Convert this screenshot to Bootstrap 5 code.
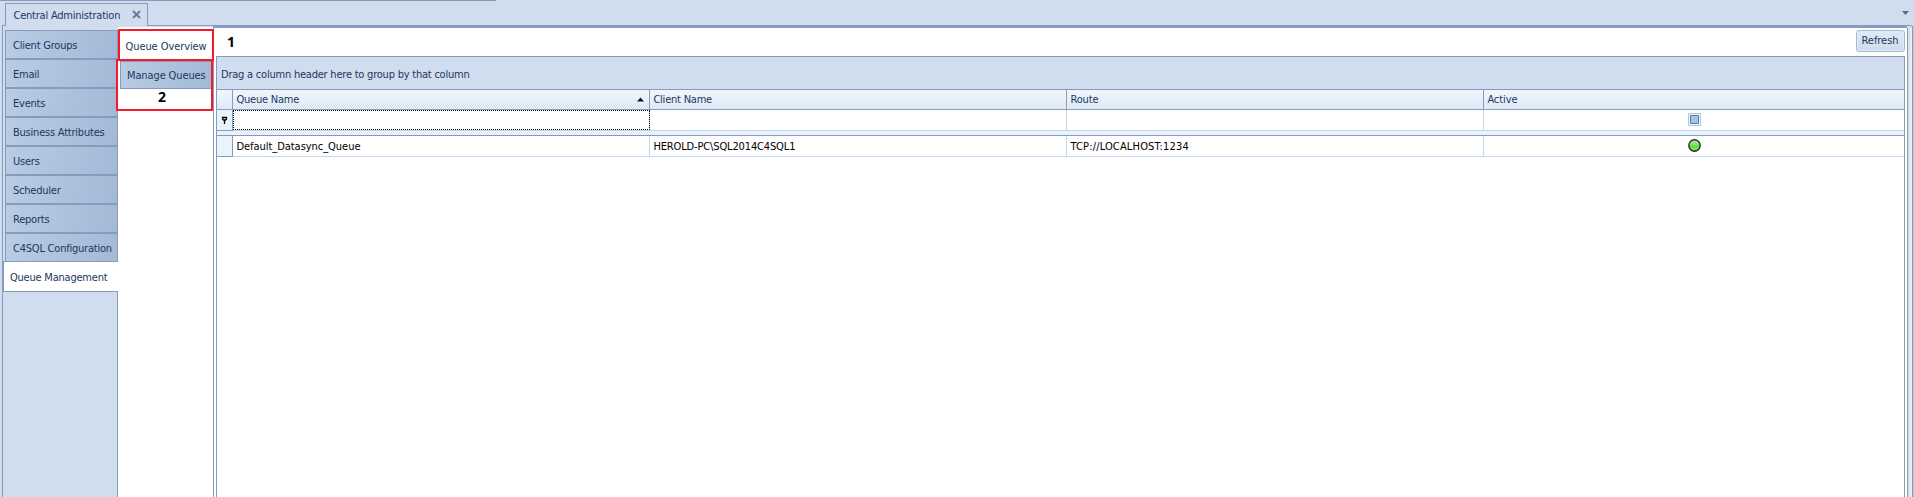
<!DOCTYPE html>
<html lang="en">
<head>
<meta charset="utf-8">
<title>Central Administration</title>
<link href="https://cdn.jsdelivr.net/npm/bootstrap@5.3.0/dist/css/bootstrap.min.css" rel="stylesheet">
<style>
:root{--line:#849dbe;--soft:#c3d6ef;--panel:#d0ddee;--ink:#203860}
html,body{height:100%}
body{font:11px/14px "DejaVu Sans Condensed","DejaVu Sans",sans-serif;font-stretch:condensed;color:var(--ink);background:var(--panel);overflow:hidden;white-space:nowrap;letter-spacing:-.22px}
.app{height:497px;width:1914px}
.topbar{height:28px}
.topline{width:496px;height:1px;background:var(--line);top:0;left:0}
.doc-tab{width:143px;height:23px;margin-left:5px;margin-top:3px;border:1px solid var(--line);border-bottom:0;padding:1px 18px 0 7.5px}
.stub{left:2px;top:25px;width:4px;height:1px;background:var(--line)}
.under{left:147px;right:2px;top:25px;height:1px;background:var(--line)}
.thick{left:213px;right:7px;top:25px;height:3px;background:var(--line)}
.workspace{height:469px}
.edge{width:3px;border-right:1px solid var(--line);margin-top:-2px}
.side{width:115px;padding-top:2px;background:linear-gradient(var(--line),var(--line)) right 264px/1px 100% no-repeat}
.side-tab{height:29px;margin-left:2px;padding:2px 0 0 7px;border:1px solid var(--line);background:linear-gradient(100deg,#b8cce4,#a3b9d6)}
.side-tab.current{height:31px;margin:-1px 0 0 0;border-right:0;padding-left:6px;background:#fff}
.inner{width:96px;margin-top:-1px;background:#fff;border-right:1px solid var(--line)}
.inner .over{height:34px;padding:13px 0 0 7.5px;letter-spacing:-.08px}
.manage{height:28px;margin:0 1px 0 2px;padding:2px 0 0 6px;border:1px solid var(--line);background:linear-gradient(100deg,#b8cce4,#a3b9d6);letter-spacing:-.12px}
.content-area{width:1694px;flex:none;background:#fff;padding:2px 2px 0 2px;border-right:1px solid var(--line)}
.tools{height:26px}
.refresh{width:49px;height:22px;font:inherit;letter-spacing:-.05px;color:var(--ink);padding:0 1px 0 0;border:1px solid #a3b9d6;border-radius:3px;background:linear-gradient(#dfeaf7,#cdddec);box-shadow:inset 0 0 0 1px #e3ecf7}
.queue-grid{border:1px solid var(--line);border-bottom:0;width:1689px;height:441px}
.groupby{height:32px;padding:4px 0 0 4px;background:var(--panel)}
.g-row{display:grid;grid-template-columns:16px 417px 417px 417px 1fr}
.g-row>div{border-right:1px solid var(--soft);padding-left:3.4px;display:flex;align-items:center}
.g-row>div:first-child{border-right-color:var(--line);background:#eaf2fb;padding:0}
.g-row>div:last-child{border-right:0}
.g-head{height:21px;border-top:1px solid var(--line);border-bottom:1px solid var(--line);background:linear-gradient(#f1f6fc,#deeaf8)}
.g-head>div{border-right-color:var(--line)!important}
.g-head>div:first-child{background:none}
.g-filter,.g-data{height:21px;border-bottom:1px solid var(--soft)}
.g-data{color:#000}
.g-data span{padding-top:1px}
.g-row>.state-cell{align-items:flex-start;justify-content:center;padding:3px 0 0 1px}
.g-filter>div:first-child,.g-data>div:first-child{border-bottom:1px solid var(--line);margin-bottom:-1px}
.g-gap{height:5px;border-bottom:1px solid var(--line);background:#e9f2fb}
.focus-cell{outline:1px dotted #000;outline-offset:-1px}
.gutter{width:4px;flex:none;background:linear-gradient(90deg,#dadada,#f2f2f2)}
.last{width:2px;flex:none;margin-top:-2px;border-left:1px solid var(--line);background:#b4c8e3}
.note{position:absolute;border:2px solid #f8192b}
.num{position:absolute;font:bold 14px/16px "Open Sans",sans-serif;color:#000}
svg{display:block;flex:none}
</style>
</head>
<body>
<div class="app position-relative">
  <div class="topbar d-flex justify-content-between">
    <div class="doc-tab d-flex align-items-center justify-content-between"><span>Central Administration</span></div>
    <svg class="mt-2" width="15" height="10" viewBox="0 0 15 10"><path d="M3 3h7L6.500 7z" fill="#52698f"/></svg>
    <svg class="position-absolute" style="left:132px;top:10px" width="9" height="9" viewBox="0 0 9 9"><path d="M1 1l7 7M8 1l-7 7" stroke="#637aa1" stroke-width="2"/></svg>
    <i class="topline position-absolute"></i><i class="stub position-absolute"></i><i class="under position-absolute"></i><i class="thick position-absolute"></i>
  </div>
  <div class="workspace d-flex">
    <div class="edge"></div>
    <nav class="side">
      <div class="side-tab d-flex align-items-center"><span>Client Groups</span></div>
      <div class="side-tab d-flex align-items-center"><span>Email</span></div>
      <div class="side-tab d-flex align-items-center"><span>Events</span></div>
      <div class="side-tab d-flex align-items-center"><span>Business Attributes</span></div>
      <div class="side-tab d-flex align-items-center"><span>Users</span></div>
      <div class="side-tab d-flex align-items-center"><span>Scheduler</span></div>
      <div class="side-tab d-flex align-items-center"><span>Reports</span></div>
      <div class="side-tab d-flex align-items-center"><span>C4SQL Configuration</span></div>
      <div class="side-tab current d-flex align-items-center"><span>Queue Management</span></div>
    </nav>
    <nav class="inner">
      <div class="over"><span>Queue Overview</span></div>
      <div class="manage d-flex align-items-center"><span>Manage Queues</span></div>
    </nav>
    <main class="content-area">
      <div class="tools d-flex justify-content-end"><button class="refresh"><span>Refresh</span></button></div>
      <div class="queue-grid">
        <div class="groupby d-flex align-items-center"><span>Drag a column header here to group by that column</span></div>
        <div class="g-row g-head">
          <div></div>
          <div class="justify-content-between"><span>Queue Name</span><svg class="me-1" width="9" height="5" viewBox="0 0 9 5"><path d="M1 4.500h7L4.500 0.500z" fill="#111"/></svg></div>
          <div><span>Client Name</span></div><div><span style="letter-spacing:-.1px">Route</span></div><div><span style="letter-spacing:-.1px">Active</span></div>
        </div>
        <div class="g-row g-filter">
          <div class="justify-content-center"><svg width="7" height="9" viewBox="0 0 7 9"><path d="M1.500 1.500h4v1.500l-1 1h-2l-1-1z" fill="none" stroke="#000" stroke-width="1.300"/><path d="M3.500 4v4" stroke="#000" stroke-width="1.300"/></svg></div>
          <div class="focus-cell"></div><div></div><div></div>
          <div class="state-cell"><svg width="13" height="13" viewBox="0 0 13 13"><path d="M.5.500h12v12H.500z" fill="#f3f7fb" stroke="#afc5e0"/><path d="M2.500 2.500h8v8h-8z" fill="#a7c3e3" stroke="#557bae"/></svg></div>
        </div>
        <div class="g-gap"></div>
        <div class="g-row g-data">
          <div></div><div><span style="letter-spacing:-.04px">Default_Datasync_Queue</span></div><div><span style="letter-spacing:-.14px">HEROLD-PC\SQL2014C4SQL1</span></div><div><span style="letter-spacing:.16px">TCP://LOCALHOST:1234</span></div>
          <div class="state-cell"><svg width="13" height="13" viewBox="0 0 13 13"><defs><linearGradient id="lamp" x2="0" y2="1"><stop offset="0" stop-color="#a9e39b"/><stop offset=".48" stop-color="#8edb77"/><stop offset=".52" stop-color="#5fdc33"/><stop offset="1" stop-color="#86ee5f"/></linearGradient></defs><circle cx="6.500" cy="6.500" r="5.700" fill="url(#lamp)" stroke="#25331f" stroke-width="1.400"/></svg></div>
        </div>
      </div>
    </main>
    <div class="gutter"></div>
    <div class="last"></div>
  </div>
  <div class="note" style="left:116px;top:59px;width:97px;height:52px"></div>
  <div class="note" style="left:118px;top:29px;width:96px;height:32px"></div>
  <div class="num" style="left:227px;top:34px">1</div>
  <div class="num" style="left:158px;top:89px">2</div>
</div>
<script src="https://cdn.jsdelivr.net/npm/bootstrap@5.3.0/dist/js/bootstrap.bundle.min.js"></script>
</body>
</html>
